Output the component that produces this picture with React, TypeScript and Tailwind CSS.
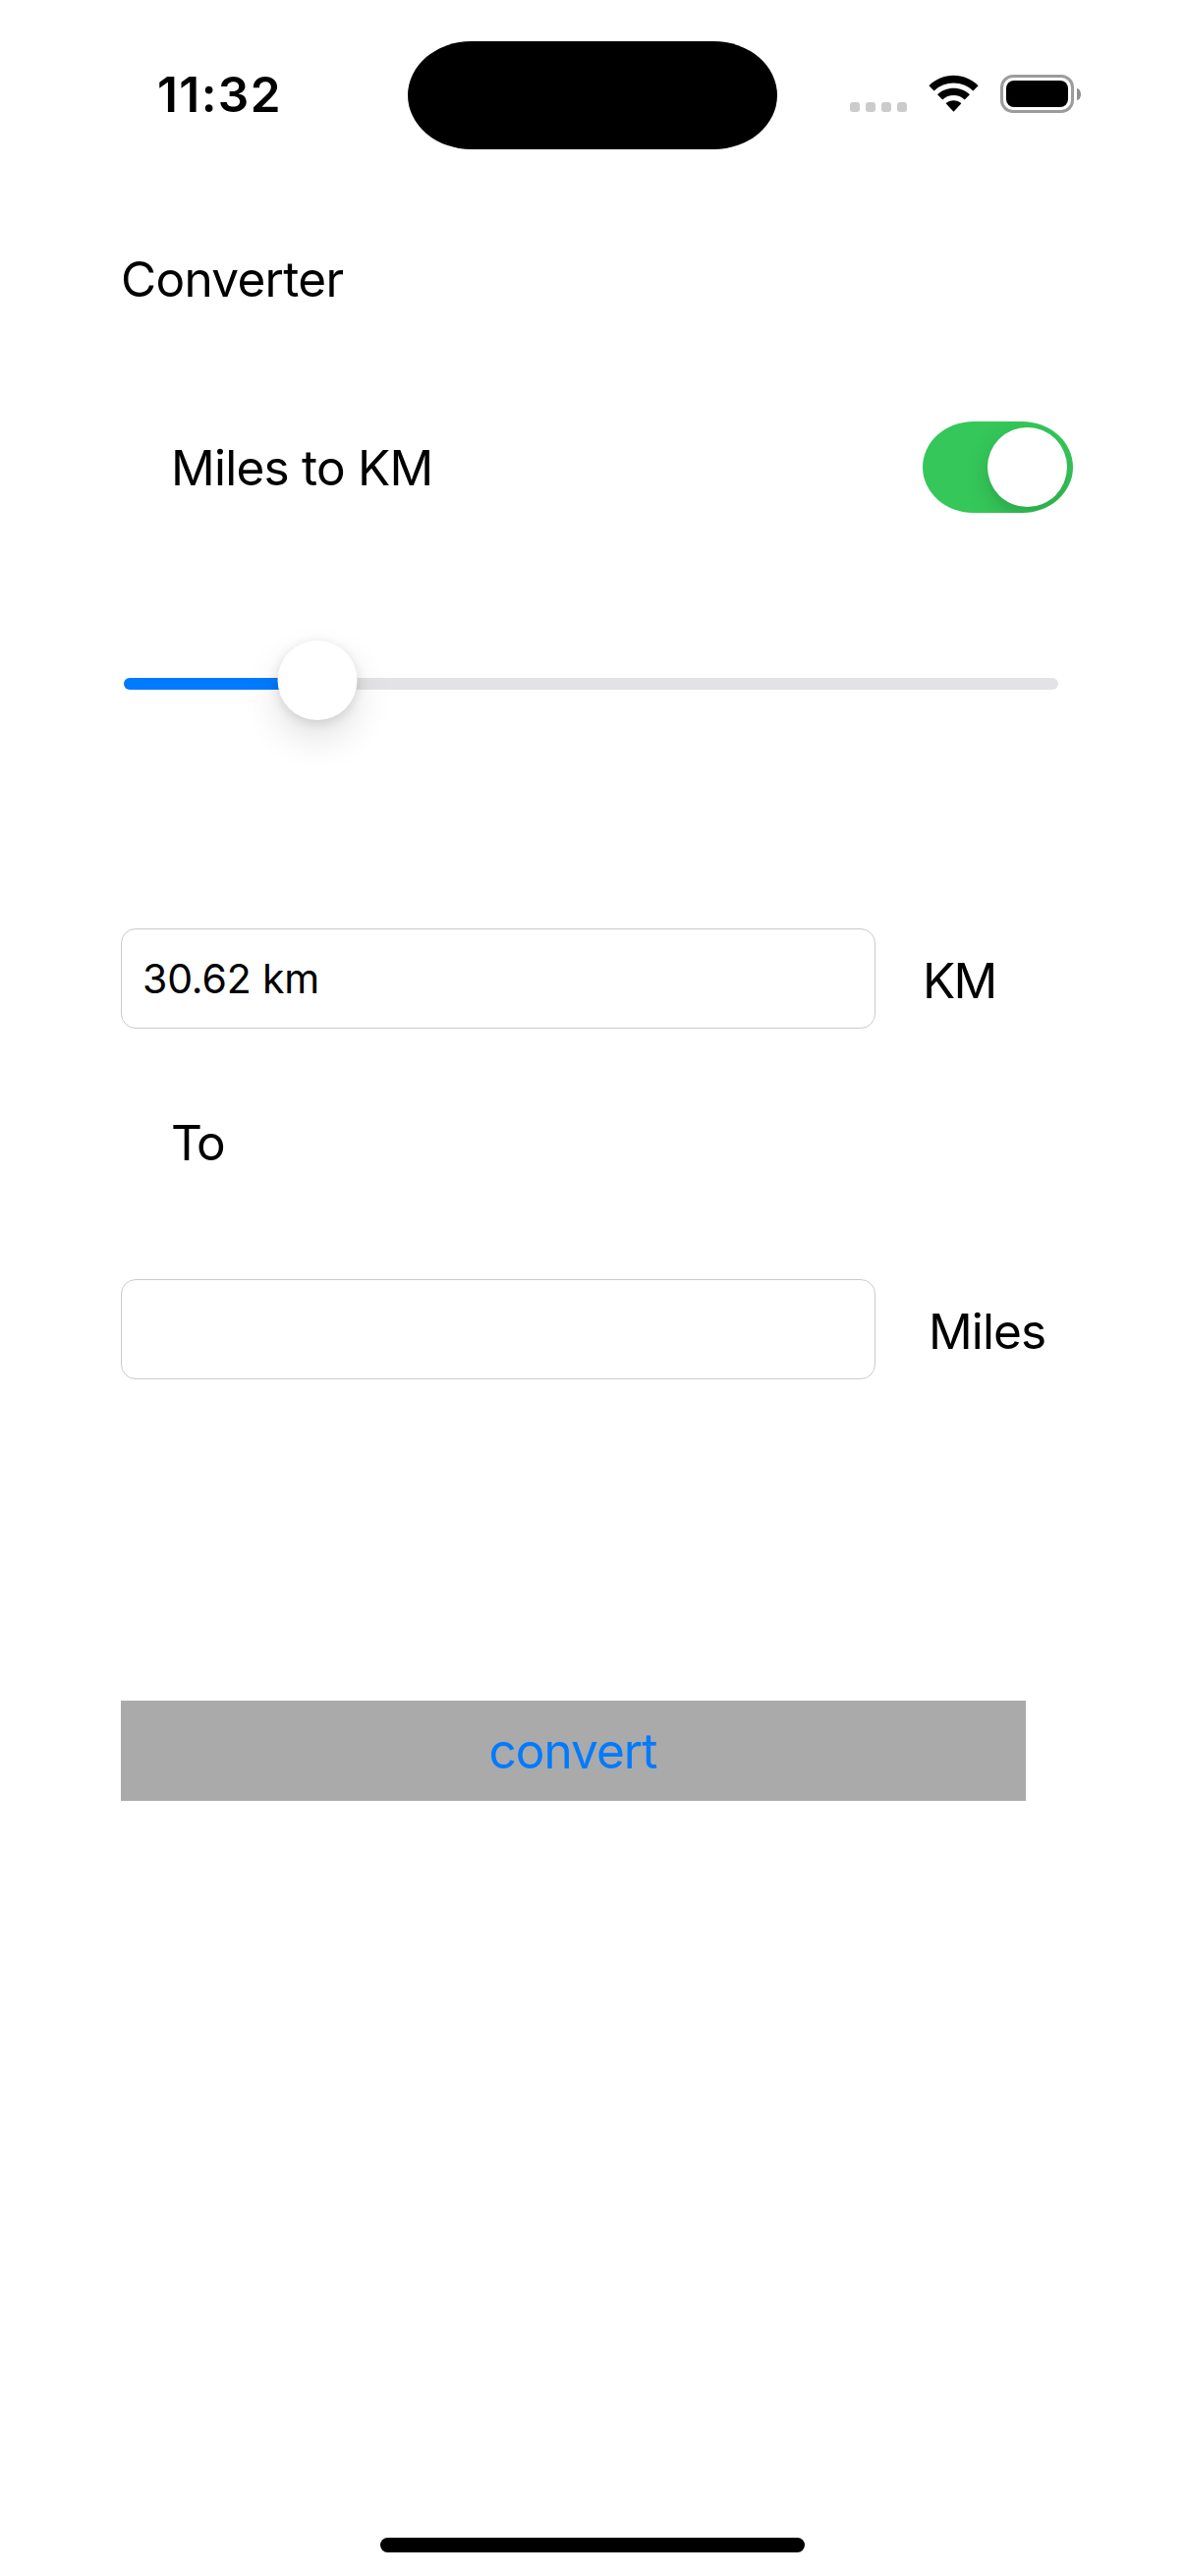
function SignalDots() {
  return (
    <div className="mt-[104px] ml-[74px] flex gap-[6px]">
      {[0, 1, 2, 3].map((dot) => (
        <span key={dot} className="size-[10px] rounded-[3px] bg-[#cbcbcb]" />
      ))}
    </div>
  );
}

function WifiIcon() {
  return (
    <svg className="mt-[76px] ml-[22px] h-[39px] w-[51px]" viewBox="0 0 51 39" fill="black">
      <path d="M0.4 11.2C7.2 4.5 16 0.8 25.5 0.8S43.8 4.5 50.6 11.2L45.4 16.6C40 11.3 33 8.5 25.5 8.5S11 11.3 5.6 16.6Z" />
      <path d="M9 20.2C13.4 15.9 19.2 13.7 25.5 13.7S37.6 15.9 42 20.2L36.7 25.5C33.6 22.6 29.8 21.1 25.5 21.1S17.4 22.6 14.3 25.5Z" />
      <path d="M17.6 29.2C19.7 27.3 22.5 26.3 25.5 26.3S31.3 27.3 33.4 29.2L25.5 37.7Z" />
    </svg>
  );
}

function BatteryIcon() {
  return (
    <div className="mt-[76px] ml-[22px] flex items-center self-start">
      <div className="h-[39px] w-[75px] rounded-[13px] border-[3px] border-[#9c9c9c] p-[3px]">
        <div className="h-full w-full rounded-[8px] bg-black" />
      </div>
      <span className="ml-[3px] h-[12px] w-[4px] rounded-[0_4px_4px_0/0_6px_6px_0] bg-[#8f8f8f]" />
    </div>
  );
}

function StatusBar() {
  return (
    <header className="flex h-[162px] items-start">
      <div className="mt-[66px] ml-[160px] w-[254.5px] text-[49.5px] leading-[60px] font-semibold tracking-[1.4px]">
        11:32
      </div>
      <div className="mt-[41.5px] h-[110.5px] w-[376.5px] rounded-[65px/55.25px] bg-black" />
      <SignalDots />
      <WifiIcon />
      <BatteryIcon />
    </header>
  );
}

function Switch() {
  return (
    <div
      role="switch"
      aria-checked="true"
      className="flex h-[93px] w-[153px] items-center justify-end overflow-hidden rounded-[52px/46.5px] bg-[#35c759] pr-[6px]"
    >
      <span className="size-[81px] rounded-full bg-white shadow-[0_9px_24px_rgba(0,0,0,0.15),0_9px_3px_rgba(0,0,0,0.02)]" />
    </div>
  );
}

function Slider({ value }: { value: number }) {
  return (
    <div className="relative mt-[130px] ml-[3px] h-[81px] w-[951px] pt-[38px]">
      <div className="h-[12px] rounded-full bg-[#e3e3e5]">
        <div className="h-full rounded-full bg-[#007aff]" style={{ width: `${value}%` }} />
      </div>
      <span
        className="absolute top-0 size-[81px] -translate-x-1/2 rounded-full bg-white shadow-[0_18px_39px_rgba(0,0,0,0.12),0_3px_12px_rgba(0,0,0,0.12)]"
        style={{ left: `${value}%` }}
      />
    </div>
  );
}

function Field({ value }: { value?: string }) {
  return (
    <div className="h-[102px] w-[768px] rounded-[15px] border border-[#cacaca] pl-[21px] text-[41px] leading-[100px] tracking-[-0.15px]">
      {value}
    </div>
  );
}

export default function App() {
  return (
    <div className="flex h-[2622px] w-[1206px] flex-col overflow-hidden bg-white font-['Inter',sans-serif] text-[49.5px] text-black">
      <StatusBar />
      <main className="flex flex-col pl-[123px]">
        <h1 className="mt-[92px] h-[60px] leading-[60px] tracking-[-0.7px]">Converter</h1>

        <div className="mt-[115px] flex h-[93px]">
          <span className="ml-[51px] w-[765px] leading-[94px] tracking-[-0.77px]">Miles to KM</span>
          <Switch />
        </div>

        <Slider value={20.67} />

        <div className="mt-[212px] flex h-[102px]">
          <Field value="30.62 km" />
          <span className="ml-[48px] leading-[106px] tracking-[-1.8px]">KM</span>
        </div>

        <div className="mt-[86px] ml-[51px] h-[60px] leading-[60px] tracking-[-2px]">To</div>

        <div className="mt-[109px] flex h-[102px]">
          <Field />
          <span className="ml-[54px] leading-[106px] tracking-[-0.9px]">Miles</span>
        </div>

        <button className="mt-[327px] h-[102px] w-[921px] bg-[#aaaaaa] pr-px text-center leading-[102px] tracking-[-0.95px] text-[#007aff]">
          convert
        </button>
      </main>
      <div className="mx-auto mt-auto mb-[24px] h-[15px] w-[432px] rounded-full bg-black" />
    </div>
  );
}
